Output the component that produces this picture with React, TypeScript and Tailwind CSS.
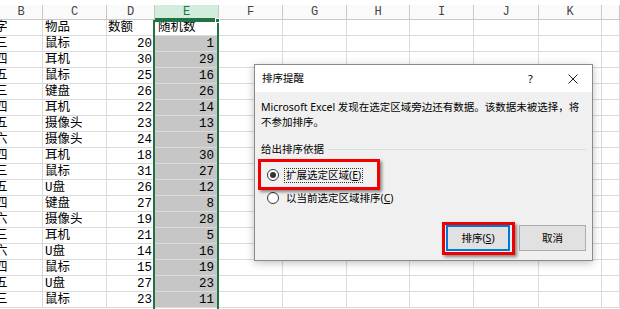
import type { ReactNode } from 'react'

const sheetFont = { fontFamily: '"Liberation Mono", "Noto Sans CJK SC", monospace' }
const uiFont = { fontFamily: '"Noto Sans", "Noto Sans CJK SC", sans-serif' }

const headers = ['B', 'C', 'D', 'E', 'F', 'G', 'H', 'I', 'J', 'K', '']

const rows: [string, string, string, string][] = [
  ['字', '物品', '数额', '随机数'],
  ['三', '鼠标', '20', '1'],
  ['四', '耳机', '30', '29'],
  ['五', '鼠标', '25', '16'],
  ['三', '键盘', '26', '26'],
  ['四', '耳机', '22', '14'],
  ['五', '摄像头', '23', '13'],
  ['六', '摄像头', '24', '5'],
  ['四', '耳机', '18', '30'],
  ['三', '鼠标', '31', '27'],
  ['五', 'U盘', '26', '12'],
  ['四', '键盘', '27', '8'],
  ['六', '摄像头', '19', '28'],
  ['三', '耳机', '21', '5'],
  ['六', 'U盘', '14', '16'],
  ['四', '鼠标', '15', '19'],
  ['五', 'U盘', '27', '23'],
  ['三', '鼠标', '23', '11'],
]

const gridCols = 'grid grid-cols-[43px_64px_48px_64px_64px_64px_63px_64px_65px_63px_1fr]'

function Cell({ children, className = '' }: { children?: ReactNode; className?: string }) {
  return (
    <div className={`h-[16px] border-r border-b border-[#dadada] overflow-hidden whitespace-nowrap text-[12.5px] leading-[16px] text-black ${className}`}>
      {children}
    </div>
  )
}

function Radio({ checked, children }: { checked?: boolean; children: ReactNode }) {
  return (
    <div className="flex h-[16px] items-center gap-[5px]">
      <div className="flex h-[12px] w-[12px] items-center justify-center rounded-full border border-[#333] bg-white">
        {checked && <div className="h-[6px] w-[6px] rounded-full bg-[#333]" />}
      </div>
      {children}
    </div>
  )
}

function Dialog() {
  return (
    <div
      className="absolute left-[254px] top-[64px] flex h-[197px] w-[339px] flex-col border border-[#8a8a8a] bg-[#f0f0f0] text-[10.5px] text-black shadow-[0_2px_8px_rgba(0,0,0,0.25)]"
      style={uiFont}
    >
      <div className="relative flex h-[27px] items-center bg-white pl-[7px]">
        <span>排序提醒</span>
        <span className="absolute left-[273px] top-[6px] text-[11px]">?</span>
        <svg className="absolute left-[313px] top-[9px]" width="10" height="10" viewBox="0 0 10 10">
          <path d="M0.5 0.5 L9.5 9.5 M9.5 0.5 L0.5 9.5" stroke="#222" strokeWidth="1" />
        </svg>
      </div>

      <div className="flex flex-1 flex-col px-[6px] pt-[8px] pb-[9px] leading-[15px]">
        <p>Microsoft Excel 发现在选定区域旁边还有数据。该数据未被选择，将</p>
        <p>不参加排序。</p>

        <div className="mt-[12px] flex items-center gap-[4px]">
          <span>给出排序依据</span>
          <div className="h-px flex-1 bg-[#dcdcdc]" />
        </div>

        <div className="mt-[10px] ml-[6px] flex flex-col gap-[7px]">
          <Radio checked>
            <span className="border border-dotted border-[#333] px-[1px] leading-[13px]">
              扩展选定区域(<span className="underline">E</span>)
            </span>
          </Radio>
          <Radio>
            <span className="px-[2px]">
              以当前选定区域排序(<span className="underline">C</span>)
            </span>
          </Radio>
        </div>

        <div className="mt-auto flex justify-end gap-[9px]">
          <button className="flex h-[26px] w-[64px] items-center justify-center border-2 border-[#0078d7] bg-[#e1e1e1]">
            排序(<span className="underline">S</span>)
          </button>
          <button className="flex h-[26px] w-[67px] items-center justify-center border border-[#adadad] bg-[#e1e1e1]">
            取消
          </button>
        </div>
      </div>

      <div className="absolute left-[3px] top-[94px] h-[31px] w-[122px] border-[3px] border-[#f00000] shadow-[2px_2px_3px_rgba(0,0,0,0.45)]" />
      <div className="absolute left-[187px] top-[157px] h-[33px] w-[73px] border-[3px] border-[#f00000] shadow-[2px_2px_3px_rgba(0,0,0,0.45)]" />
    </div>
  )
}

export default function App() {
  return (
    <div className="relative h-[309px] w-[620px] overflow-hidden bg-white" style={sheetFont}>
      <div className="h-[5px]" />
      <div className={gridCols}>
        {headers.map((h) => (
          <div
            key={h || 'L'}
            className={
              h === 'E'
                ? 'flex h-[15px] items-center justify-center border-r border-b-2 border-r-[#c8c8c8] border-b-[#217346] bg-[#d3eddd] text-[12px] text-[#217346]'
                : 'flex h-[15px] items-center justify-center border-r border-b border-[#c8c8c8] bg-[#fafafa] text-[12px] text-[#444]'
            }
          >
            {h}
          </div>
        ))}
      </div>

      <div className={gridCols}>
        {rows.map((r, i) => (
          <div key={i} className="contents">
            <Cell>
              <span className="ml-[-5px]">{r[0]}</span>
            </Cell>
            <Cell className="pl-[2px]">{r[1]}</Cell>
            <Cell className={i === 0 ? 'pl-[1px]' : 'pr-[2px] text-right'}>{r[2]}</Cell>
            <Cell className={i === 0 ? 'pl-[3px] bg-white' : 'pr-[4px] text-right bg-[#c6c6c6]'}>{r[3]}</Cell>
            <Cell />
            <Cell />
            <Cell />
            <Cell />
            <Cell />
            <Cell />
            <Cell />
          </div>
        ))}
      </div>

      <div className="absolute left-[153px] top-[20px] h-[292px] w-[66px] border-2 border-[#217346]" />
      <div className="absolute left-[215px] top-[18px] h-[5px] w-[5px] border border-white bg-[#217346]" />

      <Dialog />
    </div>
  )
}
